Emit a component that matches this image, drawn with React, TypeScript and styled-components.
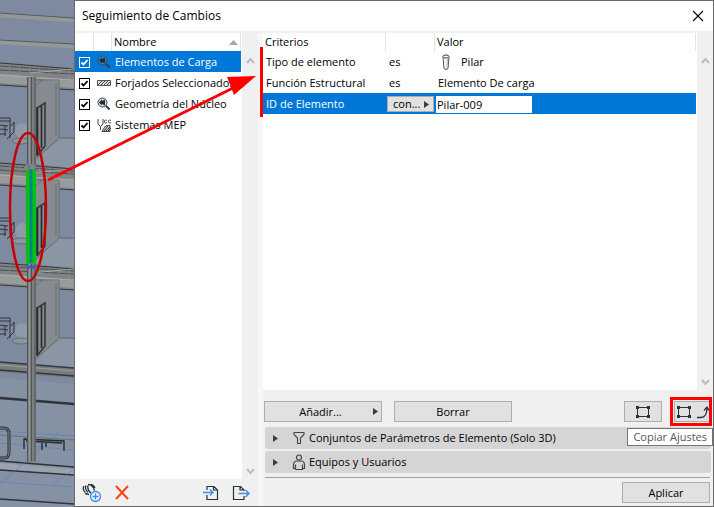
import React from 'react';
import styled, { createGlobalStyle } from 'styled-components';

const GlobalStyle = createGlobalStyle`
  * { box-sizing: border-box; }
  body {
    margin: 0;
    background: #8290a3;
    color: #000;
    font-family: "Open Sans", "Noto Sans", sans-serif;
    font-size: 11px;
    line-height: 16px;
  }
  button, input { font: inherit; color: inherit; }
`;

const Screen = styled.main`
  position: relative;
  display: grid;
  grid-template-columns: 74px minmax(0, 1fr);
  min-height: 100vh;
  overflow: hidden;
`;

const Viewport = styled.div`
  overflow: hidden;
  svg { display: block; }
`;

const Dialog = styled.section`
  display: flex;
  flex-direction: column;
  min-width: 0;
  border: 1px solid #6b6b6b;
  border-left: 0;
  box-shadow: inset 1px 0 #6b6b6b;
  background: #f0f0f0;
`;

const TitleBar = styled.header`
  display: flex;
  align-items: center;
  justify-content: space-between;
  height: 30px;
  margin-left: 1px;
  padding: 0 9px 0 7px;
  background: #fff;
`;

const Title = styled.h1`
  margin: 0;
  font-size: 12px;
  font-weight: 400;
`;

const IconButton = styled.button`
  display: grid;
  place-items: center;
  padding: 0;
  border: 0;
  background: none;
  svg { display: block; }
`;

const Body = styled.div`
  display: flex;
  flex: 1;
  min-height: 0;
  margin-left: 1px;
  padding-top: 2px;
`;

const Sidebar = styled.div`
  display: flex;
  flex-direction: column;
  flex: 0 0 183px;
`;

const Splitter = styled.div`
  flex: 0 0 5px;
  background: #f7f7f7;
`;

const Main = styled.div`
  display: flex;
  flex-direction: column;
  flex: 1;
  min-width: 0;
`;

const ListArea = styled.div`
  display: flex;
  flex: 1;
  background: #fff;
`;

const ListContent = styled.div`
  flex: 1;
  min-width: 0;
  padding-right: 1px;
`;

const ScrollTrack = styled.div`
  display: flex;
  flex-direction: column;
  justify-content: space-between;
  align-items: center;
  flex: 0 0 16px;
  padding: 24px 0 4px;
  background: #f0f0f0;
`;

const Table = styled.table`
  width: 100%;
  table-layout: fixed;
  border-collapse: separate;
  border-spacing: 0;
`;

const HeadCell = styled.th`
  height: 18px;
  padding: 0 0 0 2px;
  border-right: 1px solid #e3e3e3;
  font-weight: 400;
  line-height: 18px;
  text-align: left;
`;

const HeadLabel = styled.span`
  display: flex;
  align-items: center;
  justify-content: space-between;
  padding-right: 2px;
`;

const Row = styled.tr<{ $selected?: boolean }>`
  background: ${(p) => (p.$selected ? '#0078d7' : '#fff')};
  color: ${(p) => (p.$selected ? '#fff' : '#000')};
`;

const Cell = styled.td<{ $flush?: boolean }>`
  height: 21px;
  padding: 1px 0 0 ${(p) => (p.$flush ? 1 : 3)}px;
  white-space: nowrap;
  vertical-align: middle;
  svg { display: block; }
`;

const CheckWrap = styled.label`
  display: grid;
  width: 11px;
  height: 11px;
  margin-left: 1px;
  > * { grid-area: 1 / 1; }
  svg { pointer-events: none; }
`;

const CheckInput = styled.input<{ $inverse?: boolean }>`
  appearance: none;
  width: 11px;
  height: 11px;
  margin: 0;
  border: 1px solid ${(p) => (p.$inverse ? '#fff' : '#000')};
  background: ${(p) => (p.$inverse ? '#0078d7' : '#fff')};
`;

const SidebarTools = styled.div`
  display: flex;
  align-items: center;
  gap: 13px;
  height: 27px;
  padding: 0 8px 0 7px;
`;

const Spacer = styled.span`
  flex: 1;
`;

const ValueLine = styled.span`
  display: flex;
  align-items: center;
  gap: 11px;
  padding-left: 4px;
`;

const OperatorButton = styled.button`
  display: flex;
  align-items: center;
  justify-content: space-between;
  width: 47px;
  height: 16px;
  padding: 0 4px 0 5px;
  border: 1px solid #adadad;
  background: #e1e1e1;
  color: #000;
  line-height: 14px;
`;

const ValueInput = styled.input`
  display: block;
  width: 96px;
  height: 17px;
  padding: 0 1px;
  border: 0;
  outline: 0;
  background: #fff;
  color: #000;
`;

const Actions = styled.div`
  display: flex;
  gap: 12px;
  padding: 11px 3px 5px 1px;
`;

const Button = styled.button<{ $width: number }>`
  display: flex;
  align-items: center;
  justify-content: center;
  width: ${(p) => p.$width}px;
  height: 21px;
  padding: 0 3px;
  border: 1px solid #adadad;
  background: #e1e1e1;
  svg { flex: none; }
`;

const CopyButton = styled(Button)`
  justify-content: space-between;
  padding: 0 0 0 1px;
`;

const ButtonLabel = styled.span`
  flex: 1;
  text-align: center;
`;

const CopyAnchor = styled.div`
  position: relative;
`;

const Highlight = styled.div`
  position: absolute;
  inset: -4px -2px -4px -4px;
  border: 3px solid #f00;
  pointer-events: none;
`;

const Tooltip = styled.div`
  position: absolute;
  z-index: 2;
  top: 27px;
  right: -3px;
  padding: 0 5px;
  border: 1px solid #767676;
  background: #fff;
  color: #575757;
  white-space: nowrap;
`;

const Sections = styled.div`
  display: flex;
  flex-direction: column;
  gap: 2px;
  margin: 0 2px;
  padding-bottom: 4px;
`;

const SectionButton = styled.button`
  display: flex;
  align-items: center;
  height: 22px;
  padding: 0 8px;
  border: 0;
  border-radius: 3px;
  background: #d5d5d5;
  text-align: left;
`;

const SectionIcon = styled.span`
  display: grid;
  place-items: center;
  width: 16px;
  margin: 0 2px 0 13px;
`;

const Footer = styled.footer`
  display: flex;
  justify-content: flex-end;
  margin: 0 3px 0 2px;
  padding: 4px 0 3px;
  border-top: 1px solid #a0a0a0;
`;

const CriteriaMark = styled.div`
  position: absolute;
  top: 47px;
  left: 260px;
  width: 3px;
  height: 70px;
  background: #f00;
`;

const MarkupLayer = styled.svg`
  position: absolute;
  top: 0;
  left: 0;
  pointer-events: none;
`;

function Storey({ y }: { y: number }) {
  return (
    <g transform={`translate(0 ${y})`}>
      <path d="M36 159 60 138H74V168L36 164Z" fill="#8a96a3" />
      <path d="M0 62 74 68V90L0 85Z" fill="#808486" />
      <path d="M0 74 74 80V88L0 83Z" fill="#979b9b" />
      <path d="M0 63 74 69M0 85 74 90" stroke="#33373a" strokeWidth="1.2" />
      <path d="M0 66 74 71M0 70 74 74" stroke="#4b5053" strokeDasharray="9 1" />
      <path d="M0 75 74 80M30 73 74 69" stroke="#b0b2af" strokeWidth=".8" />
      <path d="M36 78 60 82V138L36 160Z" fill="#858b90" />
      <path d="M36 80h23v58L36 159M56 84v52M36 85l8-6" stroke="#62686c" strokeWidth=".8" fill="none" />
      <path d="M60 138h14" stroke="#5a636d" />
      <circle cx="23" cy="131" r="8" fill="#8e9aa7" />
      <ellipse cx="21" cy="141" rx="9" ry="3" fill="#8b95a0" stroke="#5b6165" strokeWidth=".8" />
      <path d="M0 118h10v20M0 121h11M0 125l8 1M0 129l8 1M0 134h6M5 126v10M11 126l3-4v10l-7 7" stroke="#303437" fill="none" />
      <path d="M37 156v-48l8-5v43l-8 10" stroke="#353a3c" strokeWidth="1.6" fill="none" />
      <path d="M37.500 108v46M41.500 106v42" stroke="#23292b" strokeWidth="1.6" />
    </g>
  );
}

function BuildingScene() {
  return (
    <svg width="74" height="507" viewBox="0 0 74 507" aria-hidden="true">
      <path d="M0 0h74v507H0Z" fill="#7d8a9f" />
      <path d="M0 15 74 20M0 42 74 46" stroke="#92979a" strokeWidth="5" />
      <path d="M0 13 74 18M0 40 74 44" stroke="#55595b" />
      <Storey y={0} />
      <Storey y={100} />
      <Storey y={200} />
      <path d="M0 362 74 369V378L0 372Z" fill="#777c7e" />
      <path d="M0 362 74 368M0 370 74 376" stroke="#33383c" strokeWidth="1.5" />
      <path d="M0 365 74 371" stroke="#9ca09d" />
      <path d="M0 378 74 384V507H0Z" fill="#8492a3" />
      <path d="M0 398 74 404" stroke="#303438" strokeWidth="2.5" />
      <path d="M0 435 74 440" stroke="#65717c" />
      <path d="M0 463 74 469V475L0 469Z" fill="#98a3ae" />
      <path d="M0 461 74 467M0 470 74 475M0 499 74 504" stroke="#303438" strokeWidth="1.3" />
      <path d="M0 431 74 436M60 431 0 484M74 469 52 486M0 482 74 487M0 443 74 450" stroke="#5376d7" strokeWidth=".7" opacity=".7" fill="none" />
      <path d="M0 428h4q5 0 5 6v18q0 6-5 6H0" stroke="#2b2f32" strokeWidth="3" fill="none" />
      <path d="M0 428h4q5 0 5 6v18q0 6-5 6H0" stroke="#858c91" strokeWidth="1" fill="none" />
      <path d="M24 449V439L64 441V451M26 441 62 443M42 440V450M46 442V447" stroke="#252b2e" strokeWidth="1.4" fill="none" />
      <path d="M27 77h9v385h-9Z" fill="#7b7f80" />
      <path d="M27.500 77v384M31.500 77v384M35 77v384" stroke="#4f5456" />
      <path d="M29.500 77v384" stroke="#969692" />
      <ellipse cx="30" cy="167" rx="6" ry="3" fill="#858589" />
      <path d="M26 170h10v94H26Z" fill="#00c50b" />
      <path d="M31 169v94" stroke="#0b8090" strokeWidth="3" />
      <path d="M27 267h8" stroke="#5050cc" strokeWidth="3" />
      <path d="M29 165v4" stroke="#4a63a8" />
    </svg>
  );
}

const Markup = () => (
  <MarkupLayer width="260" height="290" viewBox="0 0 260 290" aria-hidden="true">
    <ellipse cx="28" cy="207" rx="18" ry="74" fill="none" stroke="#c90000" strokeWidth="2.5" />
    <path d="M48 180 235 87" stroke="#f00" strokeWidth="3" />
    <path d="M256 76 227 77 234 95Z" fill="#f00" />
  </MarkupLayer>
);

const Caret = () => (
  <svg width="5" height="7" viewBox="0 0 5 7" aria-hidden="true">
    <path d="M0 0 5 3.500 0 7Z" fill="#3c3c3c" />
  </svg>
);

const Chevron = ({ down = false }: { down?: boolean }) => (
  <svg width="9" height="7" viewBox="0 0 9 7" aria-hidden="true">
    <path d={down ? 'M1 1 4.500 5 8 1' : 'M1 6 4.500 2 8 6'} fill="none" stroke="#bdbdbd" strokeWidth="2" />
  </svg>
);

const ScrollBar = () => (
  <ScrollTrack>
    <Chevron />
    <Chevron down />
  </ScrollTrack>
);

const MagnifierIcon = () => (
  <svg width="14" height="14" viewBox="0 0 14 14" aria-hidden="true">
    <circle cx="5.500" cy="5.500" r="4.500" fill="#8a949b" fillOpacity=".35" stroke="#3d4850" />
    <path d="M2 5.500 5 2.500V4L8 2.500V8.500L5 7V8.500Z" fill="#1f2a31" />
    <path d="M9 8.800 12.500 12.500" stroke="#34404a" strokeWidth="2" />
  </svg>
);

const HatchIcon = () => (
  <svg width="14" height="14" viewBox="0 0 14 14" aria-hidden="true">
    <path d="M.5 4.500h13v5H.5Z" fill="#ddd" stroke="#555" />
    <path d="M1 9 5 5M4 9 8 5M7 9 11 5M10 9 13 6" stroke="#444" />
  </svg>
);

const MepIcon = () => (
  <svg width="15" height="15" viewBox="0 0 15 15" aria-hidden="true">
    <path d="M1 1v5l2.500 2.500L6 6V1M3.500 8.500V12" fill="none" stroke="#444" />
    <path d="M10 2.500Q7 1 7.500 4 8 6 10 4.500M14 2.500Q11 1 11.500 4 12 6 14 4.500" fill="none" stroke="#555" />
    <path d="M5 13.500 8 8.500q2-1.500 5-1v6Z" fill="#ccc" stroke="#444" />
    <path d="M7 13 11 8M9 13 13 9M11 13 14 10" stroke="#333" />
  </svg>
);

const PillarIcon = () => (
  <svg width="8" height="17" viewBox="0 0 8 17" aria-hidden="true">
    <path d="M1 2.500 2 14.500q2 2 4 0L7 2.500" fill="#f4f5f5" stroke="#4c555c" />
    <ellipse cx="4" cy="2.500" rx="3" ry="1.500" fill="#fff" stroke="#354049" />
    <path d="M5.500 5 5 14" stroke="#b5babd" />
  </svg>
);

const NodesIcon = () => (
  <svg width="16" height="14" viewBox="0 0 16 14" aria-hidden="true">
    <path d="M2.500 2.500h11v9h-11Z" fill="none" stroke="#27333b" />
    <path d="M1 1h3v3H1ZM12 1h3v3h-3ZM1 10h3v3H1ZM12 10h3v3h-3Z" fill="#27333b" />
  </svg>
);

const InjectIcon = () => (
  <svg width="13" height="14" viewBox="0 0 13 14" aria-hidden="true">
    <path d="M1 12.500h4c4 0 6-3 6-10M8 5.500 11 2l2 3.500" fill="none" stroke="#27333b" strokeWidth="1.300" />
  </svg>
);

const FunnelIcon = () => (
  <svg width="12" height="14" viewBox="0 0 12 14" aria-hidden="true">
    <path d="M1 1.500h10v2L7.500 7v5.500h-3V7L1 3.500Z" fill="none" stroke="#3f474d" strokeWidth="1.100" />
  </svg>
);

const UserIcon = () => (
  <svg width="14" height="17" viewBox="0 0 14 17" aria-hidden="true">
    <circle cx="7" cy="3.500" r="2.500" fill="none" stroke="#3f474d" strokeWidth="1.200" />
    <path d="M3.500 15.500v-5m0 4H1.500V11q0-4 3.500-4h4q3.500 0 3.500 4v3.500h-2m0-4v5h-7" fill="none" stroke="#3f474d" strokeWidth="1.200" />
  </svg>
);

const NewRuleIcon = () => (
  <svg width="20" height="20" viewBox="0 0 20 20" aria-hidden="true">
    <path d="M3.500 9.500Q0 7 2 3M6 9.500Q2.500 6.500 4 2.500M9 10Q5 7 6 2.500M6 1.500q5 0 6.500 6M9 1q3 1 4 4M3 10.500l4 1" fill="none" stroke="#27333b" strokeWidth="1.300" />
    <circle cx="13.500" cy="13.500" r="5" fill="#f0f0f0" stroke="#3b8eed" strokeWidth="1.300" />
    <path d="M10.500 13.500h6M13.500 10.500v6" stroke="#3b8eed" strokeWidth="1.300" />
  </svg>
);

const DeleteIcon = () => (
  <svg width="14" height="15" viewBox="0 0 14 15" aria-hidden="true">
    <path d="M1 1 13 14M13 1 1 14" stroke="#fa4616" strokeWidth="2" />
  </svg>
);

const ImportIcon = () => (
  <svg width="16" height="16" viewBox="0 0 16 16" aria-hidden="true">
    <path d="M4 5V1.500h7L14.500 5v9.500H4V10M10.500 1.500V5h4" fill="none" stroke="#27333b" strokeWidth="1.200" />
    <path d="M0 7.500h10M7 4.500l3 3-3 3" fill="none" stroke="#3b8eed" strokeWidth="1.400" />
  </svg>
);

const ExportIcon = () => (
  <svg width="18" height="16" viewBox="0 0 18 16" aria-hidden="true">
    <path d="M12 6V5L8.500 1.500H1.500v13H12V11M8 1.500V5h4" fill="none" stroke="#27333b" strokeWidth="1.200" />
    <path d="M6.500 8.500H17M13.500 5l3.500 3.500-3.500 3.500" fill="none" stroke="#3b8eed" strokeWidth="1.400" />
  </svg>
);

const rules = [
  { name: 'Elementos de Carga', icon: <MagnifierIcon />, selected: true },
  { name: 'Forjados Seleccionados', icon: <HatchIcon /> },
  { name: 'Geometría del Núcleo', icon: <MagnifierIcon /> },
  { name: 'Sistemas MEP', icon: <MepIcon /> },
];

export default function App() {
  return (
    <>
      <GlobalStyle />
      <Screen>
        <Viewport>
          <BuildingScene />
        </Viewport>
        <Dialog aria-labelledby="dialog-title">
          <TitleBar>
            <Title id="dialog-title">Seguimiento de Cambios</Title>
            <IconButton aria-label="Cerrar">
              <svg width="12" height="12" viewBox="0 0 12 12">
                <path d="M1 1 11 11M11 1 1 11" stroke="#000" strokeWidth="1.100" />
              </svg>
            </IconButton>
          </TitleBar>
          <Body>
            <Sidebar>
              <ListArea>
                <ListContent>
                  <Table>
                    <colgroup>
                      <col width="19" />
                      <col width="18" />
                      <col />
                    </colgroup>
                    <thead>
                      <tr>
                        <HeadCell aria-label="Activo" />
                        <HeadCell aria-label="Tipo" />
                        <HeadCell>
                          <HeadLabel>
                            Nombre
                            <svg width="9" height="5" viewBox="0 0 9 5" aria-hidden="true">
                              <path d="M0 5 4.500 0 9 5Z" fill="#a6a6a6" />
                            </svg>
                          </HeadLabel>
                        </HeadCell>
                      </tr>
                    </thead>
                    <tbody>
                      {rules.map((rule) => (
                        <Row key={rule.name} $selected={rule.selected}>
                          <Cell>
                            <CheckWrap>
                              <CheckInput type="checkbox" defaultChecked $inverse={rule.selected} aria-label={rule.name} />
                              <svg width="11" height="11" viewBox="0 0 11 11" aria-hidden="true">
                                <path d="M2.500 5.500 4.500 7.500 8.500 3" fill="none" stroke={rule.selected ? '#fff' : '#000'} strokeWidth="1.800" />
                              </svg>
                            </CheckWrap>
                          </Cell>
                          <Cell>{rule.icon}</Cell>
                          <Cell>{rule.name}</Cell>
                        </Row>
                      ))}
                    </tbody>
                  </Table>
                </ListContent>
                <ScrollBar />
              </ListArea>
              <SidebarTools>
                <IconButton aria-label="Nueva regla"><NewRuleIcon /></IconButton>
                <IconButton aria-label="Eliminar"><DeleteIcon /></IconButton>
                <Spacer />
                <IconButton aria-label="Importar"><ImportIcon /></IconButton>
                <IconButton aria-label="Exportar"><ExportIcon /></IconButton>
              </SidebarTools>
            </Sidebar>
            <Splitter />
            <Main>
              <ListArea>
                <ListContent>
                  <Table>
                    <colgroup>
                      <col width="123" />
                      <col width="49" />
                      <col />
                    </colgroup>
                    <thead>
                      <tr>
                        <HeadCell>Criterios</HeadCell>
                        <HeadCell aria-label="Operador" />
                        <HeadCell>Valor</HeadCell>
                      </tr>
                    </thead>
                    <tbody>
                      <Row>
                        <Cell>Tipo de elemento</Cell>
                        <Cell>es</Cell>
                        <Cell><ValueLine><PillarIcon />Pilar</ValueLine></Cell>
                      </Row>
                      <Row>
                        <Cell>Función Estructural</Cell>
                        <Cell>es</Cell>
                        <Cell>Elemento De carga</Cell>
                      </Row>
                      <Row $selected>
                        <Cell>ID de Elemento</Cell>
                        <Cell $flush>
                          <OperatorButton>con... <Caret /></OperatorButton>
                        </Cell>
                        <Cell $flush>
                          <ValueInput defaultValue="Pilar-009" aria-label="Valor de ID de Elemento" />
                        </Cell>
                      </Row>
                    </tbody>
                  </Table>
                </ListContent>
                <ScrollBar />
              </ListArea>
              <Actions>
                <Button $width={118}><ButtonLabel>Añadir...</ButtonLabel><Caret /></Button>
                <Button $width={118}>Borrar</Button>
                <Spacer />
                <Button $width={38} aria-label="Seleccionar elementos"><NodesIcon /></Button>
                <CopyAnchor>
                  <CopyButton $width={36} aria-label="Copiar Ajustes" aria-describedby="copy-tip">
                    <NodesIcon /><InjectIcon />
                  </CopyButton>
                  <Highlight />
                  <Tooltip id="copy-tip" role="tooltip">Copiar Ajustes</Tooltip>
                </CopyAnchor>
              </Actions>
              <Sections>
                <SectionButton>
                  <Caret /><SectionIcon><FunnelIcon /></SectionIcon>
                  Conjuntos de Parámetros de Elemento (Solo 3D)
                </SectionButton>
                <SectionButton>
                  <Caret /><SectionIcon><UserIcon /></SectionIcon>
                  Equipos y Usuarios
                </SectionButton>
              </Sections>
              <Footer>
                <Button $width={88}>Aplicar</Button>
              </Footer>
            </Main>
          </Body>
        </Dialog>
        <CriteriaMark />
        <Markup />
      </Screen>
    </>
  );
}
